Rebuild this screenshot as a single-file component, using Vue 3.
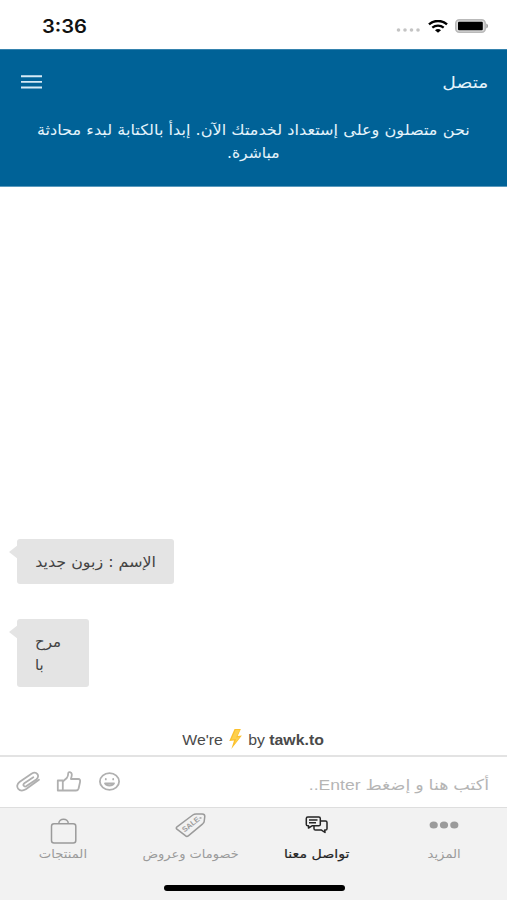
<template>
  <div class="screen">
    <div class="status-bar">
      <span class="time">3:36</span>
      <div class="status-icons">
        <svg width="25" height="4" viewBox="0 0 25 4" fill="#c4c4c4">
          <circle v-for="n in 4" :key="n" :cx="n * 6.5 - 4" cy="2" r="1.8" />
        </svg>
        <svg class="wifi" width="20" height="13" viewBox="0 0 20 13" fill="none" stroke="#000">
          <path d="M1 4.4C6-.2 14-.2 19 4.4" stroke-width="2.4" />
          <path d="M4.3 7.7c3.3-2.9 8.1-2.9 11.4 0" stroke-width="2.2" />
          <path d="M7 10.2c1.7-1.5 4.3-1.5 6 0L10 12.8z" fill="#000" stroke="none" />
        </svg>
        <svg width="34" height="14" viewBox="0 0 34 14">
          <rect x=".8" y=".8" width="29.4" height="12.4" rx="3.5" fill="#ddd" stroke="#b9b9b9" stroke-width="1.6" />
          <rect x="3" y="2.8" width="24.8" height="8.4" rx="1" fill="#000" />
          <path d="M31.3 4.5c2.2.8 2.2 4.2 0 5z" fill="#999" />
        </svg>
      </div>
    </div>

    <header class="chat-header">
      <div class="header-row">
        <svg width="21" height="14" viewBox="0 0 21 14" stroke="#d5eaf6" stroke-width="1.9">
          <path d="M0 1.2h21M0 6.9h21M0 12.5h21" />
        </svg>
        <span class="state" dir="rtl">متصل</span>
      </div>
      <p class="welcome" dir="rtl">
        <span class="first">نحن متصلون وعلى إستعداد لخدمتك الآن. إبدأ بالكتابة لبدء محادثة</span>
        <span class="second">مباشرة.</span>
      </p>
    </header>

    <main class="messages">
      <div class="bubble wide" dir="rtl"><span>الإسم : زبون جديد</span></div>
      <div class="bubble narrow" dir="rtl"><span>مرح<br>با</span></div>
      <div class="branding">
        <span>We're</span>
        <svg width="14" height="22" viewBox="0 0 14 22">
          <path d="M6.500 1h6L9.500 8l4-.5L3.500 21l2.500-8.500L1.500 13z" fill="#fbc02d" />
          <path d="M7.500 2h4L8 9.500l3.500-.6-5 7 1.500-5L3.500 11.500z" fill="#fdd04d" />
        </svg>
        <span>by <b>tawk.to</b></span>
      </div>
    </main>

    <div class="composer">
      <div class="tools">
        <svg width="26" height="24" viewBox="0 0 26 24">
          <path d="M18.300 7.300 9.300 13.200c-2.200 1.700-.1 4.300 2.200 2.900l9.700-6.600c4.500-3.500.3-8.900-4.700-5.800L4.800 11.800c-6.100 4.800-.4 11.200 6 7.500L24 9.800" />
        </svg>
        <svg width="26" height="24" viewBox="0 0 26 24">
          <path d="M1.800 10.500h5v10h-5zM6.800 11.500l4-3.500c1.300-1.600 1.400-3.100 1.500-5 .1-1.500 3.200-1.200 3.500 1.200.2 1.600-.4 3.300-.9 4.800h7.200c2 0 2.300 1.500 1.900 3.200l-1.400 6.300c-.4 1.500-1.300 2-2.600 2H6.800" />
        </svg>
        <svg width="26" height="24" viewBox="0 0 26 24">
          <ellipse cx="12.500" cy="11.500" rx="9.600" ry="8.400" />
          <path d="M8.800 9v.4M16.200 9v.4M8 13.400c1.500 2.800 7.500 2.800 9 0z" />
        </svg>
      </div>
      <span class="placeholder" dir="rtl">أكتب هنا و إضغط Enter..</span>
    </div>

    <nav class="tabs">
      <div v-for="tab in tabs" :key="tab.icon" class="tab" :class="{ active: tab.active }">
        <div class="tab-icon">
          <svg v-if="tab.icon === 'bag'" class="bag" width="28" height="27" viewBox="0 0 28 27">
            <rect x="2.500" y="5.700" width="24.300" height="19.300" rx="2.500" />
            <path d="M9.800 5.700C9.800-.2 19.300-.2 19.300 5.700" />
          </svg>
          <svg v-else-if="tab.icon === 'sale'" width="32" height="26" viewBox="0 0 32 26">
            <path d="M3 14.800 18.800 3c1-.7 2-1 3.300-1h6.200c1.600 0 2.500.9 2.500 2.300l-.6 5c-.1 1-.6 1.700-1.500 2.500L14.300 23.800c-1 .8-2 .7-2.900-.1l-8.500-6.500c-.9-.8-.8-1.700.1-2.400z" />
            <circle cx="26.500" cy="6" r=".3" />
            <text transform="translate(10.500 20.500) rotate(-38)">SALE</text>
          </svg>
          <svg v-else-if="tab.icon === 'chat'" class="chat" width="24" height="18" viewBox="0 0 24 18">
            <path d="M7 9.800 3.500 12V9.800H2.800c-1 0-1.500-.6-1.500-1.400V2.500c0-.9.6-1.500 1.500-1.500h11c.9 0 1.500.6 1.500 1.500v5.900c0 .8-.6 1.400-1.500 1.400zM4 4h8.500M4 6.700h7" />
            <path d="M15.500 5h5c1 0 1.500.6 1.500 1.500v6.300c0 .8-.6 1.300-1.500 1.300h-.8l.3 2.400-3.500-2.400h-6c-1 0-1.500-.6-1.500-1.400V10" />
          </svg>
          <svg v-else class="dots" width="30" height="8" viewBox="0 0 30 8">
            <ellipse v-for="n in 3" :key="n" :cx="n * 10.3 - 5.6" cy="4" rx="4.1" ry="3.6" />
          </svg>
        </div>
        <span class="tab-label" :class="tab.icon" dir="rtl">{{ tab.label }}</span>
      </div>
      <div class="home-indicator"></div>
    </nav>
  </div>
</template>

<script setup>
const tabs = [
  { icon: 'bag', label: 'المنتجات' },
  { icon: 'sale', label: 'خصومات وعروض' },
  { icon: 'chat', label: 'تواصل معنا', active: true },
  { icon: 'more', label: 'المزيد' }
]
</script>

<style>
body {
  margin: 0;
  background: #fff;
}
</style>

<style scoped>
.screen {
  display: flex;
  flex-direction: column;
  width: 507px;
  height: 900px;
  overflow: hidden;
  background: #fff;
  font-family: "Liberation Sans", "DejaVu Sans", sans-serif;
}

.screen * {
  box-sizing: border-box;
}

svg {
  display: block;
  flex: none;
}

.status-bar {
  flex: none;
  display: flex;
  align-items: center;
  justify-content: space-between;
  height: 49px;
  padding: 3px 18px 0 42px;
}

.time {
  font: 600 18px Inter, sans-serif;
  color: #111;
  transform: scaleX(1.12);
  transform-origin: left;
}

.status-icons {
  display: flex;
  align-items: center;
  gap: 7px;
}

.status-icons svg:first-child {
  margin-top: 7px;
}

.chat-header {
  flex: none;
  height: 138px;
  background: #006297;
  border-top: 1px solid #3583ae;
  border-bottom: 1px solid #5b9abd;
  color: #e4f3fb;
  font-family: "DejaVu Sans", sans-serif;
}

.header-row {
  display: flex;
  justify-content: space-between;
  align-items: center;
  height: 64px;
  padding: 0 19px 0 21px;
}

.state {
  font-size: 16px;
  transform: scaleX(1.17);
  transform-origin: right;
}

.welcome {
  display: flex;
  flex-direction: column;
  align-items: center;
  margin: 5px 0 0;
  font-size: 15px;
  line-height: 23px;
  white-space: nowrap;
}

.first {
  transform: scaleX(1.075);
}

.second {
  transform: scaleX(1.04);
}

.messages {
  flex: 1;
  display: flex;
  flex-direction: column;
  align-items: flex-start;
  justify-content: flex-end;
}

.bubble {
  position: relative;
  margin-left: 17px;
  background: #e4e4e4;
  border-radius: 3px;
  color: #424242;
  font: 15px/23px "DejaVu Sans", sans-serif;
  white-space: nowrap;
}

.bubble::before {
  content: "";
  position: absolute;
  left: -8px;
  top: 6px;
  border: solid transparent;
  border-width: 7px 9px 7px 0;
  border-right-color: #e4e4e4;
}

.wide {
  width: 157px;
  height: 45px;
  padding: 12px 18px 10px;
  margin-bottom: 35px;
}

.wide span {
  transform: scaleX(1.06);
  transform-origin: right;
}

.narrow {
  width: 72px;
  height: 68px;
  padding: 12px 28px 10px 18px;
}

.bubble span {
  display: block;
}

.narrow span {
  text-align: left;
}

.branding {
  align-self: center;
  display: flex;
  align-items: center;
  gap: 5px;
  height: 22px;
  margin: 41px 0 5px;
  font-size: 15px;
  color: #4a4a4a;
  transform: scaleX(1.055);
}

.composer {
  flex: none;
  display: flex;
  align-items: center;
  justify-content: space-between;
  height: 53px;
  padding: 0 18px 0 15px;
  border-top: 2px solid #e3e3e3;
  border-bottom: 1px solid #dedede;
}

.tools {
  display: flex;
  gap: 15px;
}

.tools svg {
  fill: none;
  stroke: #b0b0b0;
  stroke-width: 1.8;
  stroke-linejoin: round;
  stroke-linecap: round;
}

.placeholder {
  padding-top: 6px;
  font-size: 15px;
  color: #b5b5b5;
  white-space: nowrap;
  transform: scaleX(1.17);
  transform-origin: right;
}

.tabs {
  position: relative;
  flex: none;
  display: grid;
  grid-template-columns: repeat(4, 1fr);
  height: 92px;
  background: #f2f2f2;
}

.tab {
  display: flex;
  flex-direction: column;
  align-items: center;
  color: #9b9b9b;
}

.tab.active {
  color: #252525;
}

.tab-icon {
  display: flex;
  align-items: center;
  height: 34px;
}

.tab-icon svg {
  fill: none;
  stroke: currentColor;
  stroke-width: 1.5;
  stroke-linejoin: round;
}

.tab-icon .bag {
  margin-top: 12px;
}

.tab-icon text {
  font: bold 7.5px "Liberation Sans", sans-serif;
  fill: currentColor;
  stroke: none;
}

.tab-icon .dots {
  fill: currentColor;
  stroke: none;
}

.tab-label {
  margin-top: 3px;
  font: 12px/18px "DejaVu Sans", sans-serif;
  white-space: nowrap;
}

.tab-label.bag {
  transform: scaleX(1.1);
}

.tab-label.sale {
  transform: scaleX(1.08);
}

.tab-label.chat {
  transform: scaleX(1.18);
  -webkit-text-stroke: 0.2px currentColor;
}

.tab-label.more {
  transform: scaleX(1.1);
}

.home-indicator {
  position: absolute;
  left: 164px;
  bottom: 9px;
  width: 181px;
  height: 6px;
  border-radius: 3px;
  background: #000;
}
</style>
